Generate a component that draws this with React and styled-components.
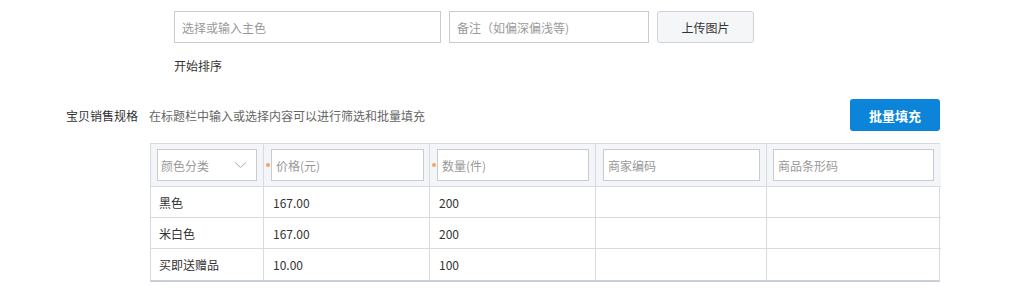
import React from "react";
import styled, { createGlobalStyle } from "styled-components";

const Global = createGlobalStyle`
  html, body { margin: 0; padding: 0; background: #fff; }
  body {
    font-family: "Noto Sans CJK SC", "Microsoft YaHei", "Liberation Sans", sans-serif;
    font-size: 12px;
    color: #333;
  }
  * { box-sizing: border-box; }
`;

const Page = styled.div`
  width: 1012px;
  padding-top: 11px;
`;

const UploadRow = styled.div`
  display: flex;
  gap: 8px;
  margin-left: 174px;
`;

const TextInput = styled.input`
  height: 32px;
  width: ${(p) => p.$w}px;
  border: 1px solid #c8ccd1;
  border-radius: 0;
  padding: 0 7px;
  font: inherit;
  font-size: 12px;
  color: #333;
  outline: none;
  background: #fff;
  &::placeholder { color: #9a9a9a; }
`;

const GhostButton = styled.button`
  height: 32px;
  width: 97px;
  border: 1px solid #cfd3d9;
  border-radius: 3px;
  background: #f5f6f8;
  font: inherit;
  font-size: 12px;
  color: #333;
  padding: 0;
`;

const SortLabel = styled.div`
  margin-left: 174px;
  margin-top: 14px;
  line-height: 18px;
  color: #333;
`;

const SpecHeader = styled.div`
  display: flex;
  align-items: center;
  margin-top: 24px;
  padding-left: 66px;
  width: 940px;
  height: 32px;
`;

const SpecTitle = styled.span`
  color: #333;
`;

const SpecHint = styled.span`
  color: #666;
  margin-left: 11px;
  flex: 1;
`;

const PrimaryButton = styled.button`
  width: 90px;
  height: 32px;
  border: none;
  border-radius: 3px;
  background: #0b84d9;
  color: #fff;
  font: inherit;
  font-size: 13px;
  font-weight: bold;
  padding: 0;
`;

const Grid = styled.div`
  margin-left: 150px;
  margin-top: 12px;
  width: 790px;
  display: grid;
  grid-template-columns: 113px 166px 166px 171px 174px;
  border: 1px solid #d6dbe1;
  border-bottom: 2px solid #c9cfd6;
`;

const HeadCell = styled.div`
  height: 43px;
  background: #f3f5f8;
  display: flex;
  align-items: center;
  padding: ${(p) => p.$pad || "0 6px"};
  border-right: ${(p) => (p.$last ? "none" : "1px solid #d6dbe1")};
  border-bottom: 1px solid #d6dbe1;
`;

const Star = styled.span`
  width: 4px;
  height: 4px;
  border-radius: 50%;
  background: #f4a46b;
  margin-right: 1px;
  flex: none;
`;

const HeadInput = styled.input`
  flex: 1;
  min-width: 0;
  height: 32px;
  border: 1px solid #c8ccd1;
  background: #fff;
  padding: 0 4px;
  font: inherit;
  font-size: 12px;
  outline: none;
  &::placeholder { color: #999; }
`;

const SelectBox = styled.div`
  flex: 1;
  height: 32px;
  border: 1px solid #c8ccd1;
  background: #fff;
  display: flex;
  align-items: center;
  justify-content: space-between;
  padding: 0 9px 0 3px;
  color: #999;
`;

const Cell = styled.div`
  height: 31px;
  display: flex;
  align-items: center;
  padding-left: ${(p) => (p.$first ? "8px" : "9px")};
  color: #333;
  border-right: ${(p) => (p.$last ? "none" : "1px solid #d6dbe1")};
  border-bottom: ${(p) => (p.$lastRow ? "none" : "1px solid #d6dbe1")};
`;

const Chevron = () => (
  <svg width="13" height="8" viewBox="0 0 13 8">
    <path d="M1 1.5 L6.5 6.5 L12 1.5" fill="none" stroke="#aaa" strokeWidth="1" />
  </svg>
);

const rows = [
  ["黑色", "167.00", "200", "", ""],
  ["米白色", "167.00", "200", "", ""],
  ["买即送赠品", "10.00", "100", "", ""],
];

export default function App() {
  return (
    <Page>
      <Global />
      <UploadRow>
        <TextInput $w={267} placeholder="选择或输入主色" />
        <TextInput $w={200} placeholder="备注（如偏深偏浅等)" />
        <GhostButton>上传图片</GhostButton>
      </UploadRow>
      <SortLabel>开始排序</SortLabel>
      <SpecHeader>
        <SpecTitle>宝贝销售规格</SpecTitle>
        <SpecHint>在标题栏中输入或选择内容可以进行筛选和批量填充</SpecHint>
        <PrimaryButton>批量填充</PrimaryButton>
      </SpecHeader>
      <Grid>
        <HeadCell>
          <SelectBox>
            <span>颜色分类</span>
            <Chevron />
          </SelectBox>
        </HeadCell>
        <HeadCell $pad="0 5px 0 2px">
          <Star />
          <HeadInput placeholder="价格(元)" />
        </HeadCell>
        <HeadCell $pad="0 6px 0 2px">
          <Star />
          <HeadInput placeholder="数量(件)" />
        </HeadCell>
        <HeadCell $pad="0 6px 0 7px">
          <HeadInput placeholder="商家编码" />
        </HeadCell>
        <HeadCell $last $pad="0 7px 0 6px">
          <HeadInput placeholder="商品条形码" />
        </HeadCell>
        {rows.map((r, ri) =>
          r.map((v, ci) => (
            <Cell
              key={ri + "-" + ci}
              $first={ci === 0}
              $last={ci === 4}
              $lastRow={ri === rows.length - 1}
            >
              {v}
            </Cell>
          ))
        )}
      </Grid>
    </Page>
  );
}
